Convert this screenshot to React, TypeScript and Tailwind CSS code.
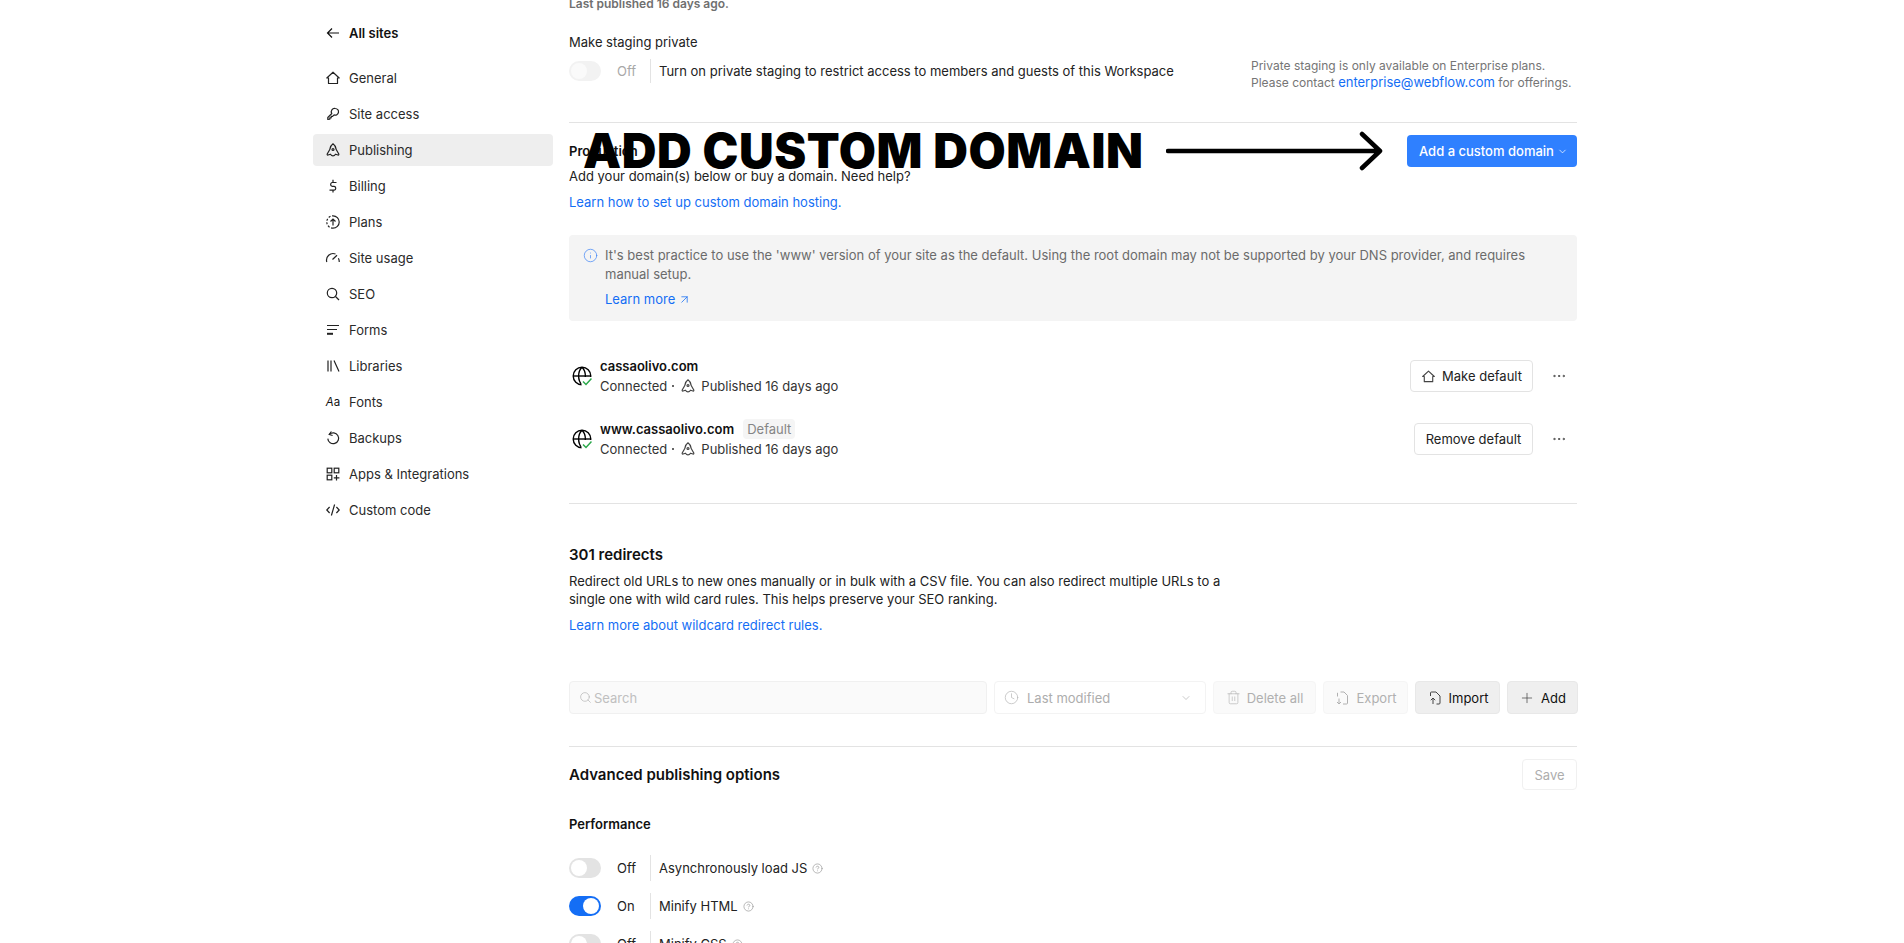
import React from "react";
import { ChevronDown, ArrowUpRight, Plus, Search, Clock, Trash2, CircleHelp, Ellipsis, Info } from "lucide-react";

type P = { className?: string };
const S = ({ children, className = "w-4 h-4", sw = 1.2 }: { children: React.ReactNode; className?: string; sw?: number }) => (
  <svg viewBox="0 0 16 16" fill="none" stroke="currentColor" strokeWidth={sw} className={`${className} shrink-0`}>{children}</svg>
);
const Home = ({ className }: P) => <S className={className}><path d="M8 2.2 14.2 8h-1.7v5.5h-9V8H1.8z" strokeLinejoin="round" /></S>;
const Key = () => <S><path d="M10.3 2.5a3.3 3.3 0 1 1-1.2 6.4L7.6 10.4H6.2v1.4H4.8v1.4L2.8 13.5v-2l4-4a3.3 3.3 0 0 1 3.5-5z" strokeLinejoin="round" /></S>;
const Rocket = ({ className }: P) => (
  <S className={className}><path d="M8 1.8C10.2 3.3 11 5.5 11.2 7.5L13.8 12C14 12.8 13.6 13.3 13 13L10.5 12.2Q9.5 13.8 8 13.8 6.5 13.8 5.5 12.2L3 13C2.4 13.3 2 12.8 2.2 12L4.8 7.5C5 5.5 5.8 3.3 8 1.8z" strokeLinejoin="round" /><circle cx="8" cy="7.5" r="1" /></S>
);
const Dollar = () => <S><path d="M11.5 4.5H7a2 2 0 0 0 0 3.8h2.2a2 2 0 0 1 0 3.9H4.5M8 1.8v2.7M8 12.2v2.2" /></S>;
const Plans = () => <S><path d="M8 1.8a6.2 6.2 0 0 1 0 12.4" /><path d="M8 14.2a6.2 6.2 0 0 1 0-12.4" strokeDasharray="2 1.6" /><path d="M8 11.5V5M5.5 7.5 8 5l2.5 2.5" /></S>;
const Usage = () => <S><path d="M1.8 12A6.6 6.6 0 0 1 10.5 4M13.4 8.2a6.6 6.6 0 0 1 .8 3.8M7.5 9.5 12 5.2" /></S>;
const Seo = () => <S><circle cx="7" cy="7" r="4.7" /><path d="m10.5 10.5 3.5 3.5" /></S>;
const Forms = () => <S><path d="M2 3.5h12M2 7.5h10" /><path d="M2 11.8h6" strokeWidth="2" /></S>;
const Lib = () => <S><path d="M3 2.5v11M6 2.5v11M9 2.5l5 11" /></S>;
const Fonts = () => <span className="w-4 shrink-0 text-[11.5px] leading-4 text-center text-[#111]"><i>A</i>a</span>;
const Backups = () => <S><path d="M4.4 4.4A5.4 5.4 0 1 1 2.8 8.6" /><path d="M6.4 1.5 4.2 4.5l3.4 1" /></S>;
const Apps = () => <S><rect x="2.2" y="2.2" width="4.6" height="4.6" /><rect x="9.2" y="2.2" width="4.6" height="4.6" /><rect x="2.2" y="9.2" width="4.6" height="4.6" /><path d="M11.5 9v5.6M8.8 11.8h5.6" /></S>;
const Code = () => <S><path d="M4.6 5 1.8 8l2.8 3M11.4 5l2.8 3-2.8 3M9.6 2.5 6.4 13.5" /></S>;
const Back = () => <S><path d="M14 8H2.5M7 3.5 2.5 8 7 12.5" /></S>;
const ExportIcon = () => <S className="w-4 h-4" sw={1}><path d="M6.5 2h3.5L13.5 5.5V13a1 1 0 0 1-1 1H9M3.5 6.5V2.8M5 8.5v5.5M3 12l2 2 2-2" /></S>;
const ImportIcon = () => <S className="w-4 h-4" sw={1}><path d="M3.5 6V3a1 1 0 0 1 1-1H9l4 4v7a1 1 0 0 1-1 1H9.5M6 14V8M3.8 10.2 6 8l2.2 2.2" /></S>;

const Globe = () => (
  <svg viewBox="0 0 20 20" fill="none" className="w-5 h-5 shrink-0">
    <g stroke="#000" strokeWidth="1.4">
      <circle cx="10" cy="10" r="8.8" />
      <path d="M1 10h18" />
      <path d="M10 1.2C5.5 5.5 5.5 14.5 10 18.8M10 1.2C14.5 5.5 14.5 14.5 10 18.8" />
    </g>
    <rect x="9.5" y="11" width="11" height="9" fill="#fff" />
    <path d="m11 15.5 3 3 5.5-6" stroke="#2aa84a" strokeWidth="1.5" />
  </svg>
);

const nav: [string, React.ReactNode, boolean?][] = [
  ["General", <Home />],
  ["Site access", <Key />],
  ["Publishing", <Rocket />, true],
  ["Billing", <Dollar />],
  ["Plans", <Plans />],
  ["Site usage", <Usage />],
  ["SEO", <Seo />],
  ["Forms", <Forms />],
  ["Libraries", <Lib />],
  ["Fonts", <Fonts />],
  ["Backups", <Backups />],
  ["Apps & Integrations", <Apps />],
  ["Custom code", <Code />],
];

const Toggle = ({ on, faint }: { on?: boolean; faint?: boolean }) => (
  <span className={`w-8 h-5 rounded-full p-[2px] flex shrink-0 ${on ? "bg-[#146ef5] justify-end" : faint ? "bg-[#f2f2f2] justify-start" : "bg-[#e3e3e3] justify-start"}`}>
    <span className={`w-4 h-4 rounded-full ${faint ? "bg-[#fafafa]" : "bg-white"}`} />
  </span>
);

const ToggleRow = ({ on, label, className = "" }: { on?: boolean; label: string; className?: string }) => (
  <div className={`flex items-center h-[26px] shrink-0 ${className}`}>
    <Toggle on={on} />
    <span className="w-[33px] ml-4 text-[#222]">{on ? "On" : "Off"}</span>
    <span className="w-px h-[26px] bg-[#e3e3e3]" />
    <span className="ml-2 text-[#222]">{label}</span>
    <CircleHelp className="w-[11px] h-[11px] ml-[5px] text-[#999]" strokeWidth={1.5} />
  </div>
);

const Status = () => (
  <div className="flex items-center h-5 text-[#333]">
    Connected
    <span className="ml-[5px] mr-[6px] w-[2px] h-[2px] bg-[#333] rounded-full" />
    <Rocket className="w-4 h-4 text-[#444]" />
    <span className="ml-[5px]">Published 16 days ago</span>
  </div>
);

const Divider = ({ className }: P) => <div className={`h-px bg-[#e3e3e3] shrink-0 ${className}`} />;

const ToolBtn = ({ w, dim, icon, children }: { w: string; dim?: boolean; icon: React.ReactNode; children: React.ReactNode }) => (
  <div className={`${w} flex items-center justify-center gap-[6px] rounded border ${dim ? "bg-[#fafafa] border-[#f5f5f5] text-[#b0b0b0]" : "bg-[#efefef] border-[#e8e8e8] text-[#111]"}`}>
    <span className={dim ? "" : "text-[#444]"}>{icon}</span>
    {children}
  </div>
);

export default function App() {
  return (
    <div className="relative flex h-[943px] overflow-hidden bg-white pl-[313px] text-[13px] leading-[18px] text-[#222] font-['Inter',sans-serif]">
      <aside className="w-[240px] shrink-0 pt-[17px]">
        <div className="flex items-center gap-2 h-8 px-3 mb-[13px] font-semibold text-[#111]">
          <Back />
          All sites
        </div>
        <nav className="flex flex-col gap-1">
          {nav.map(([label, icon, active]) => (
            <div key={label} className={`flex items-center gap-2 h-8 px-3 rounded ${active ? "bg-[#eeeeee]" : ""}`}>
              {icon}
              <span className="text-[#2a2a2a]">{label}</span>
            </div>
          ))}
        </nav>
      </aside>

      <main className="ml-4 w-[1008px] shrink-0 flex flex-col -mt-[5px]">
        <div className="h-[18px] shrink-0 text-[12px] font-semibold text-[#707070]">Last published 16 days ago.</div>
        <div className="h-[18px] mt-5 shrink-0">Make staging private</div>
        <div className="flex items-center justify-between h-6 mt-2 shrink-0">
          <div className="flex items-center">
            <Toggle faint />
            <span className="w-[33px] ml-4 text-[#a8a8a8]">Off</span>
            <span className="w-px h-6 bg-[#e3e3e3]" />
            <span className="ml-2">Turn on private staging to restrict access to members and guests of this Workspace</span>
          </div>
          <div className="w-[326px] mt-[5px] text-[12px] leading-[17px] text-[#757575] shrink-0">
            Private staging is only available on Enterprise plans.<br />
            Please contact <span className="text-[13px] text-[#146ef5]">enterprise@webflow.com</span> for offerings.
          </div>
        </div>
        <Divider className="mt-[39px]" />
        <div className="flex items-center justify-between h-8 mt-3 shrink-0">
          <span className="font-semibold text-[#111]">Production</span>
          <div className="flex items-center justify-between w-[170px] h-8 pl-3 pr-[9px] rounded bg-[#2f80ff] text-white font-medium">
            Add a custom domain
            <ChevronDown className="w-[11px] h-[11px]" strokeWidth={1.6} />
          </div>
        </div>
        <div className="h-[18px] shrink-0">Add your domain(s) below or buy a domain. Need help?</div>
        <div className="h-[18px] mt-2 shrink-0 text-[#146ef5]">Learn how to set up custom domain hosting.</div>
        <div className="flex h-[86px] mt-6 shrink-0 rounded bg-[#f4f4f4] pl-[14px] pt-[11px] pr-10 text-[#6b6b6b]">
          <Info className="w-[15px] h-[15px] mt-[2px] text-[#3b82f6] shrink-0" strokeWidth={1.1} />
          <div className="ml-[7px] leading-[19px]">
            It's best practice to use the 'www' version of your site as the default. Using the root domain may not be supported by your DNS provider, and requires manual setup.
            <div className="flex items-center gap-[3px] mt-[6px] text-[#146ef5] leading-[18px]">
              Learn more
              <ArrowUpRight className="w-[13px] h-[13px]" strokeWidth={1.4} />
            </div>
          </div>
        </div>

        <div className="flex items-center h-10 mt-[35px] shrink-0">
          <div className="ml-[3px]"><Globe /></div>
          <div className="ml-2">
            <div className="h-[19px] font-semibold text-[#111]">cassaolivo.com</div>
            <Status />
          </div>
          <div className="ml-auto flex items-center gap-[6px] h-8 w-[123px] justify-center rounded border border-[#e3e3e3] text-[#222]">
            <Home className="w-[15px] h-[15px] text-[#444]" />
            Make default
          </div>
          <Ellipsis className="w-4 h-4 ml-[18px] mr-[10px] text-[#444]" strokeWidth={1.4} />
        </div>
        <div className="flex items-center h-10 mt-[23px] shrink-0">
          <div className="ml-[3px]"><Globe /></div>
          <div className="ml-2">
            <div className="flex items-center h-5 font-semibold text-[#111]">
              www.cassaolivo.com
              <span className="ml-[9px] px-1 h-5 rounded-sm bg-[#f5f5f5] text-[#858585] font-normal leading-5">Default</span>
            </div>
            <Status />
          </div>
          <div className="ml-auto flex items-center h-8 w-[119px] justify-center rounded border border-[#e3e3e3] text-[#222]">Remove default</div>
          <Ellipsis className="w-4 h-4 ml-[18px] mr-[10px] text-[#444]" strokeWidth={1.4} />
        </div>
        <Divider className="mt-[44px]" />

        <div className="h-5 mt-[41px] shrink-0 text-[15px] leading-5 font-semibold text-[#111]">301 redirects</div>
        <p className="mt-[7px] max-w-[660px] shrink-0">Redirect old URLs to new ones manually or in bulk with a CSV file. You can also redirect multiple URLs to a single one with wild card rules. This helps preserve your SEO ranking.</p>
        <div className="h-[18px] mt-2 shrink-0 text-[#146ef5]">Learn more about wildcard redirect rules.</div>

        <div className="flex justify-between h-[33px] mt-[47px] shrink-0 -mr-px">
          <div className="w-[418px] flex items-center gap-[2px] pl-[9px] rounded border border-[#f0f0f0] bg-[#fafafa] text-[#c0c0c0]">
            <Search className="w-[13px] h-[13px] text-[#b5b5b5]" strokeWidth={1.3} />
            Search
          </div>
          <div className="w-[212px] flex items-center pl-[9px] pr-[13px] rounded border border-[#f3f3f3] text-[#adadad]">
            <Clock className="w-[15px] h-[15px] mr-[8px] text-[#b5b5b5]" strokeWidth={1.1} />
            Last modified
            <ChevronDown className="w-3 h-3 ml-auto" strokeWidth={1.3} />
          </div>
          <ToolBtn w="w-[103px]" dim icon={<Trash2 className="w-[15px] h-[15px]" strokeWidth={1} />}>Delete all</ToolBtn>
          <ToolBtn w="w-[85px]" dim icon={<ExportIcon />}>Export</ToolBtn>
          <ToolBtn w="w-[85px]" icon={<ImportIcon />}>Import</ToolBtn>
          <ToolBtn w="w-[71px]" icon={<Plus className="w-4 h-4" strokeWidth={1.1} />}>Add</ToolBtn>
        </div>
        <Divider className="mt-8" />
        <div className="flex items-center justify-between h-[31px] mt-3 shrink-0">
          <span className="text-[15px] font-semibold text-[#111]">Advanced publishing options</span>
          <span className="w-[55px] h-[31px] flex items-center justify-center rounded border border-[#f0f0f0] text-[#adadad]">Save</span>
        </div>
        <div className="h-[18px] mt-[25px] shrink-0 font-semibold text-[#111]">Performance</div>
        <ToggleRow className="mt-[22px]" label="Asynchronously load JS" />
        <ToggleRow className="mt-3" on label="Minify HTML" />
        <ToggleRow className="mt-3" label="Minify CSS" />
      </main>

      <div className="absolute left-[583px] top-[122px] text-[48px] leading-[58px] font-black tracking-[0.6px] text-black whitespace-nowrap">ADD CUSTOM DOMAIN</div>
      <svg className="absolute left-[1166px] top-[130px] w-[218px] h-[42px]" viewBox="0 0 218 42" fill="none" stroke="#000" strokeWidth="4.5" strokeLinecap="round" strokeLinejoin="round">
        <path d="M2 21h212M196 4l18 17-18 17" />
      </svg>
    </div>
  );
}
